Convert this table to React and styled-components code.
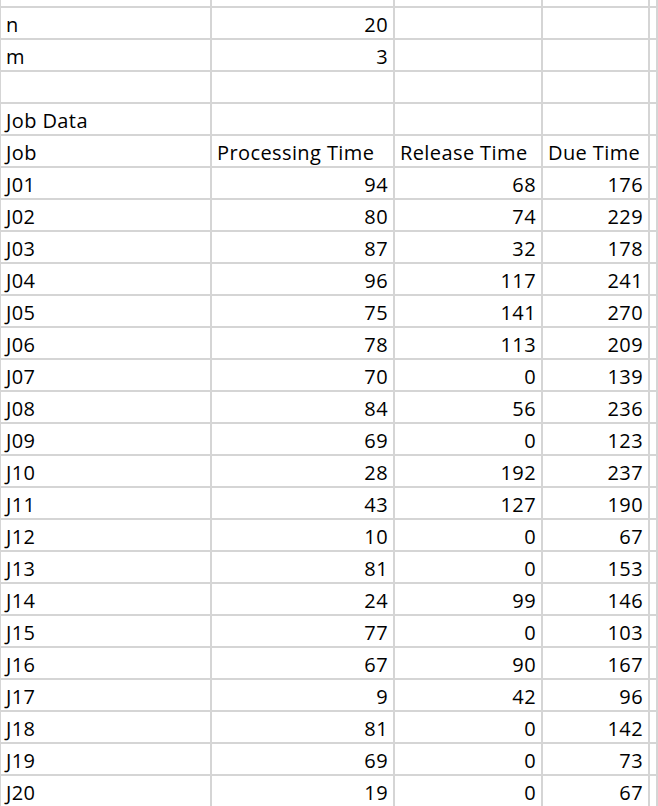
import React from "react";
import styled, { createGlobalStyle } from "styled-components";

const Global = createGlobalStyle`
  html, body { margin: 0; padding: 0; background: #ffffff; overflow: hidden; }
  body { font-family: "Open Sans", "Liberation Sans", sans-serif; }
`;

const Sheet = styled.div`
  display: grid;
  grid-template-columns: 209px 181px 146px 105px 6px;
  grid-auto-rows: 30px;
  gap: 2px;
  padding: 2px;
  margin: -26px 0 0 -1px;
  background: #d5d5d5;
  width: max-content;
`;

const Cell = styled.div`
  background: #ffffff;
  display: flex;
  align-items: flex-end;
  justify-content: ${(p) => (p.$num ? "flex-end" : "flex-start")};
  padding: 0 ${(p) => (p.$num ? "5px" : "0")} 1px ${(p) => (p.$num ? "0" : "5px")};
  font-size: 20px;
  letter-spacing: 0.4px;
  line-height: 24px;
  color: #000000;
  white-space: nowrap;
  overflow: hidden;
`;

const jobs = [
  ["J01", 94, 68, 176],
  ["J02", 80, 74, 229],
  ["J03", 87, 32, 178],
  ["J04", 96, 117, 241],
  ["J05", 75, 141, 270],
  ["J06", 78, 113, 209],
  ["J07", 70, 0, 139],
  ["J08", 84, 56, 236],
  ["J09", 69, 0, 123],
  ["J10", 28, 192, 237],
  ["J11", 43, 127, 190],
  ["J12", 10, 0, 67],
  ["J13", 81, 0, 153],
  ["J14", 24, 99, 146],
  ["J15", 77, 0, 103],
  ["J16", 67, 90, 167],
  ["J17", 9, 42, 96],
  ["J18", 81, 0, 142],
  ["J19", 69, 0, 73],
  ["J20", 19, 0, 67],
];

const Row = ({ cells }) => (
  <>
    {cells.map((c, i) => (
      <Cell key={i} $num={typeof c === "number"}>
        {c}
      </Cell>
    ))}
    <Cell />
  </>
);

export default function App() {
  return (
    <>
      <Global />
      <Sheet>
        <Row cells={["", "", "", ""]} />
        <Row cells={["n", 20, "", ""]} />
        <Row cells={["m", 3, "", ""]} />
        <Row cells={["", "", "", ""]} />
        <Row cells={["Job Data", "", "", ""]} />
        <Row cells={["Job", "Processing Time", "Release Time", "Due Time"]} />
        {jobs.map((j) => (
          <Row key={j[0]} cells={j} />
        ))}
      </Sheet>
    </>
  );
}
